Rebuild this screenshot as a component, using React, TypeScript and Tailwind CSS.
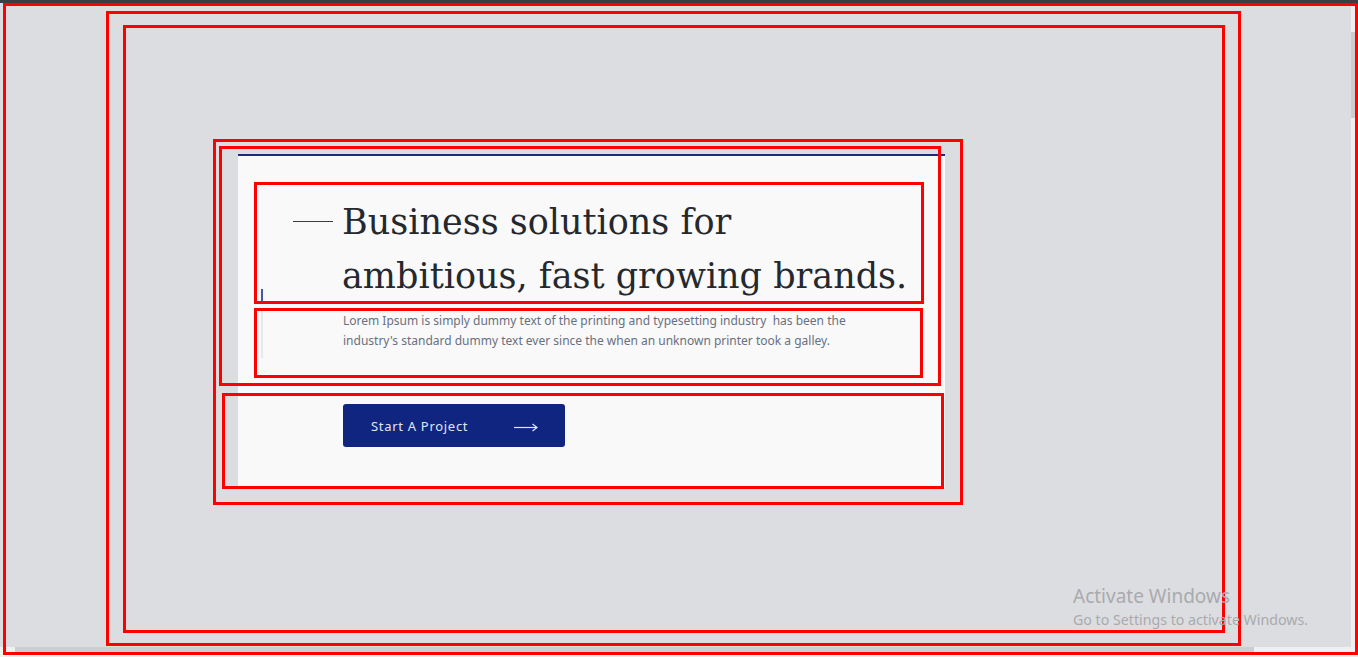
export default function App() {
  return (
    <div className="relative h-[657px] w-[1358px] overflow-hidden bg-[#dcdde0] font-['Noto_Sans',sans-serif]">
      <div className="h-[3px] bg-[#3b3e43]" />

      <div className="flex h-[644px]">
        <main className="w-[1351px] pl-[106px] pt-[8px]">
          <div className="h-[635px] w-[1135px] border-[3px] border-[#ff0000] pl-[14px] pt-[11px]">
            <div className="h-[608px] w-[1102px] border-[3px] border-[#ff0000] pl-[87px] pt-[111px]">
              <section className="relative h-[366px] w-[750px] border-[3px] border-[#ff0000] pl-[22px] pt-[12px]">
                {/* card */}
                <div className="h-[334px] w-[707px] border-t-2 border-[#1c2c78] bg-[#f9f9fa] pl-[16px] pt-[26px]">
                  <div className="relative h-[122px] w-[670px] border-[3px] border-[#ff0000]">
                    <h1 className="flex items-start pl-[36px] pt-[10px] font-['DejaVu_Serif',serif] text-[35px] font-normal leading-[54px] text-[#25282d]">
                      <span className="mr-[9px] mt-[26px] h-px w-10 shrink-0 bg-[#3a3d42]" />
                      <span>
                        Business solutions for
                        <br />
                        ambitious, fast growing brands.
                      </span>
                    </h1>
                    <span className="absolute bottom-0 left-[4px] h-[12px] w-[2px] bg-[#4557a8]" />
                  </div>

                  <div className="mt-[4px] h-[70px] w-[669px] border-[3px] border-[#ff0000]">
                    <div className="ml-[4px] border-l-2 border-[#e7e8ed] pb-[7px] pl-[80px] text-[12px] leading-[20px] text-[#687080]">
                      <p className="whitespace-pre">
                        {"Lorem Ipsum is simply dummy text of the printing and typesetting industry  has been the"}
                      </p>
                      <p>industry's standard dummy text ever since the when an unknown printer took a galley.</p>
                    </div>
                  </div>

                  <button className="ml-[89px] mt-[26px] flex h-[43px] w-[222px] items-center justify-between rounded-[3px] bg-[#0f2580] pl-[28px] pr-[27px] pt-[3px] text-[13px] tracking-[0.7px] text-[#e1e5f0]">
                    <span>Start A Project</span>
                    <svg width="24" height="9" viewBox="0 0 24 9" fill="none" stroke="#e1e5f0" strokeWidth="1.2">
                      <path d="M0 4.5H23" />
                      <path d="M18.5 1L23 4.5L18.5 8" />
                    </svg>
                  </button>
                </div>

                {/* outlines lying over the card */}
                <div className="pointer-events-none absolute left-[3px] top-[4px] h-[240px] w-[722px] border-[3px] border-[#ff0000]" />
                <div className="pointer-events-none absolute left-[6px] top-[251px] h-[96px] w-[722px] border-[3px] border-[#ff0000]" />
              </section>
            </div>
          </div>
        </main>

        {/* vertical scrollbar */}
        <div className="w-[7px] bg-[#efeff0] pt-[29px]">
          <div className="h-[86px] bg-[#cdcdcd]" />
        </div>
      </div>

      {/* horizontal scrollbar */}
      <div className="flex h-[10px] bg-[#f0f0f0] pl-[15px]">
        <div className="h-[7px] w-[1239px] bg-[#cdcdcd]" />
      </div>

      {/* outer outline */}
      <div className="pointer-events-none absolute left-[3px] top-[3px] h-[652px] w-[1355px] border-[3px] border-[#ff0000]" />

      {/* watermark */}
      <div className="pointer-events-none absolute left-[1073px] top-[584px] text-[#a9aaae]">
        <div className="text-[19px] leading-[25px]">Activate Windows</div>
        <div className="mt-px text-[14.2px] leading-[20px]">Go to Settings to activate Windows.</div>
      </div>
    </div>
  );
}
